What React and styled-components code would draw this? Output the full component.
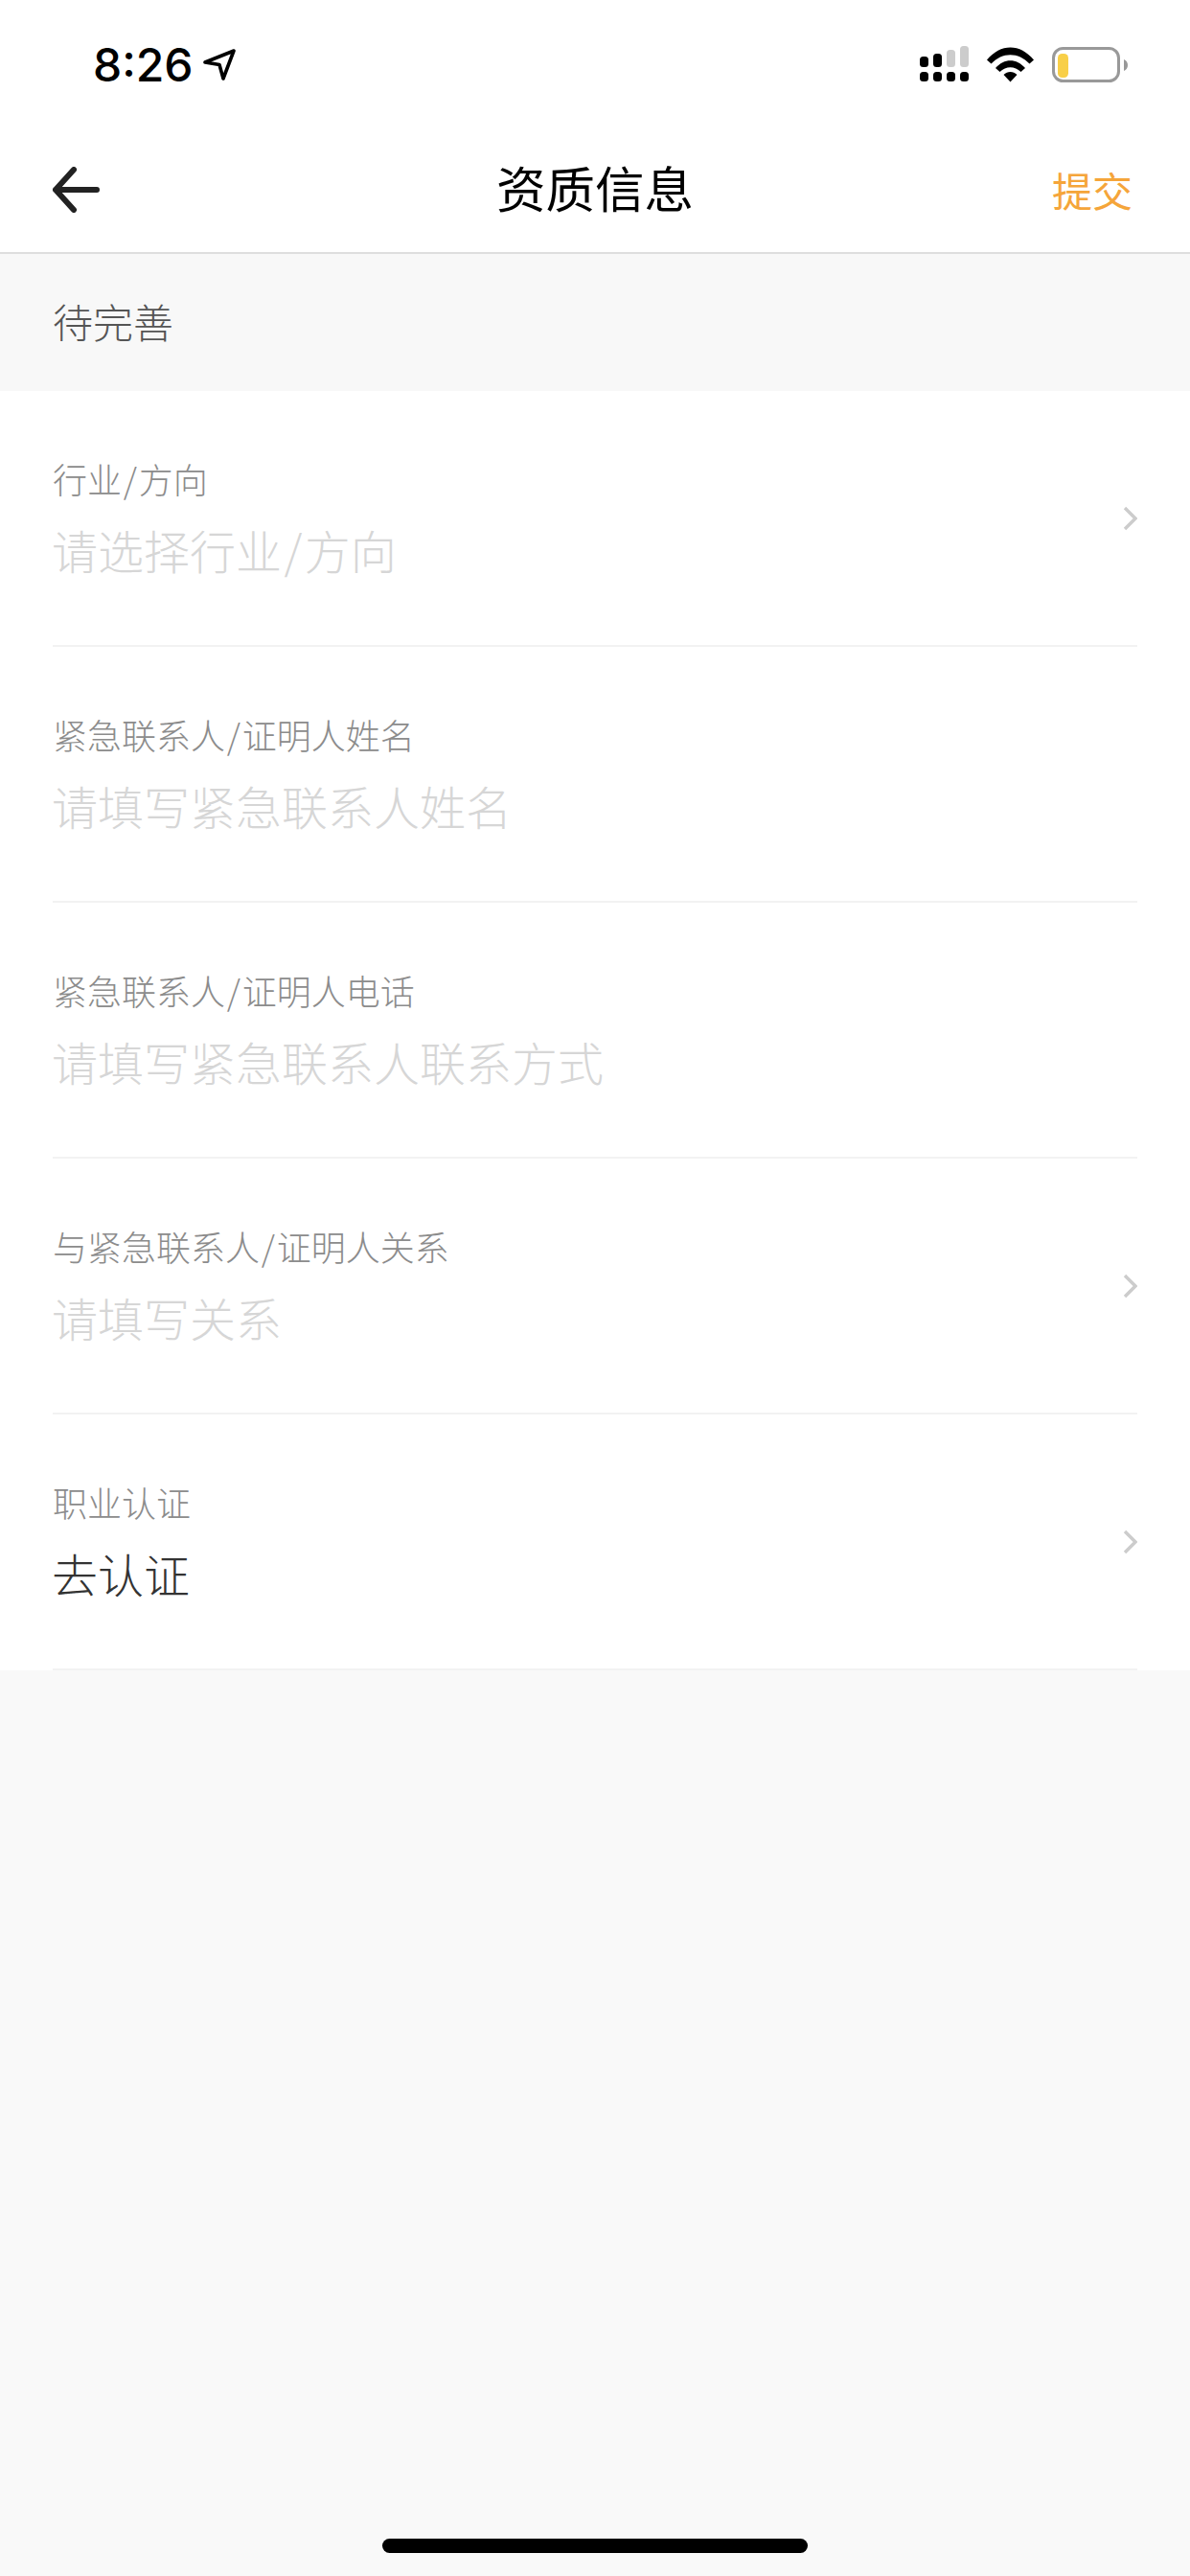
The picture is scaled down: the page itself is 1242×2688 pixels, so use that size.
import React from "react";
import styled, { createGlobalStyle } from "styled-components";

const Global = createGlobalStyle`
  html, body { margin: 0; padding: 0; background: #f9f9f9; }
  body { font-family: "Noto Sans CJK SC", "Noto Sans", sans-serif; }
`;
const Page = styled.div`
  position: relative;
  width: 1242px;
  height: 2688px;
  background: #f9f9f9;
  overflow: hidden;
`;
const StatusBar = styled.div`
  height: 132px;
  background: #fff;
  box-sizing: border-box;
  display: flex;
  justify-content: space-between;
  align-items: flex-start;
  padding: 48px 65px 0 97px;
`;
const TimeGroup = styled.div`
  display: flex;
  align-items: flex-start;
  gap: 10px;
`;
const Time = styled.span`
  font-family: Inter, sans-serif;
  font-size: 48px;
  font-weight: 500;
  line-height: 39px;
  color: #000;
`;
const NavBar = styled.div`
  height: 133px;
  background: #fff;
  border-bottom: 2px solid #dedede;
  box-sizing: border-box;
  display: flex;
  align-items: center;
  justify-content: space-between;
  padding: 0 60px 0 54px;
  position: relative;
`;
const Title = styled.div`
  position: absolute;
  left: 0;
  right: 0;
  top: 25px;
  text-align: center;
  font-size: 51.5px;
  line-height: 76px;
  font-weight: 400;
  color: #000;
`;
const Submit = styled.span`
  font-size: 42px;
  line-height: 60px;
  font-weight: 400;
  color: #f5a53a;
`;
const StatusNote = styled.div`
  height: 143px;
  box-sizing: border-box;
  padding: 0 55px 5px;
  display: flex;
  align-items: center;
  font-size: 42px;
  font-weight: 300;
  color: #555;
  background: #f8f8f8;
`;
const Form = styled.div`
  background: #fff;
`;
const Row = styled.div`
  height: 267px;
  box-sizing: border-box;
  margin: 0 55px;
  border-bottom: 2px solid #f2f2f2;
  display: flex;
  align-items: center;
  justify-content: space-between;
`;
const Field = styled.div`
  display: flex;
  flex-direction: column;
  gap: 13px;
`;
const Label = styled.div`
  font-size: 36px;
  line-height: 52px;
  font-weight: 300;
  color: #8c8c8c;
`;
const Value = styled.div`
  font-size: 48px;
  line-height: 70px;
  font-weight: 300;
  margin-left: -1px;
  color: ${(p) => (p.$filled ? "#333" : "#d6d6d6")};
`;
const Slash = styled.span`
  margin: 0 0.05em;
`;
const HomeBar = styled.div`
  position: absolute;
  left: 399px;
  top: 2649px;
  width: 444px;
  height: 15px;
  border-radius: 8px;
  background: #000;
`;
const Icons = styled.div`
  display: flex;
  align-items: flex-start;
  gap: 19px;
`;

const Arrow = () => (
  <svg width="34" height="33" viewBox="0 0 34 33" style={{ marginTop: 3 }}>
    <path d="M2 14 L32 2 L21 31 L17 16.5 Z" fill="none" stroke="#000" strokeWidth="3.6" strokeLinejoin="round" />
  </svg>
);
const Signal = () => (
  <svg width="51" height="38" viewBox="0 0 51 38">
    <rect x="0" y="11" width="9" height="11" rx="3.5" fill="#000" />
    <rect x="14" y="8" width="9" height="14" rx="3.5" fill="#000" />
    <rect x="28" y="4" width="9" height="18" rx="3.5" fill="#ccc" />
    <rect x="42" y="0" width="9" height="22" rx="3.5" fill="#ccc" />
    <rect x="0" y="27" width="9" height="10" rx="3.5" fill="#000" />
    <rect x="14" y="27" width="9" height="10" rx="3.5" fill="#000" />
    <rect x="28" y="27" width="9" height="10" rx="3.5" fill="#000" />
    <rect x="42" y="27" width="9" height="10" rx="3.5" fill="#000" />
  </svg>
);
const Wifi = () => (
  <svg width="49" height="37" viewBox="0 0 49 37" style={{ marginTop: 1 }}>
    <path d="M0 13.5 C14 -4 35 -4 49 13.5 L44.5 17.5 C33 5 16 5 4.5 17.5 Z" fill="#000" />
    <path d="M9 22 C18 11.5 31 11.5 40 22 L35.5 26 C29 19.5 20 19.5 13.5 26 Z" fill="#000" />
    <path d="M17.5 29 C21.5 25 27.5 25 31.5 29 L24.5 36.5 Z" fill="#000" />
  </svg>
);
const Battery = () => (
  <svg width="79" height="38" viewBox="0 0 79 38" style={{ marginTop: 1 }}>
    <rect x="1.5" y="1.5" width="68" height="34" rx="10" fill="none" stroke="#999" strokeWidth="3" />
    <rect x="6" y="7" width="11" height="25" rx="4.5" fill="#f8cf48" />
    <path d="M75 13 C77.5 14 79 16 79 19 C79 22 77.5 24 75 25 Z" fill="#999" />
  </svg>
);
const Back = () => (
  <svg width="50" height="48" viewBox="0 0 50 48">
    <path d="M4 24 H47 M23 3 L4 24 L23 45" fill="none" stroke="#222" strokeWidth="6" strokeLinecap="round" strokeLinejoin="round" />
  </svg>
);
const Chevron = () => (
  <svg width="16" height="26" viewBox="0 0 16 26">
    <path d="M3 2 L14 13 L3 24" fill="none" stroke="#ccc" strokeWidth="3.4" />
  </svg>
);

const withSlash = (t) => {
  const parts = t.split("/");
  return parts.length === 2 ? (
    <>
      {parts[0]}
      <Slash>/</Slash>
      {parts[1]}
    </>
  ) : (
    t
  );
};

const rows = [
  { label: "行业/方向", value: "请选择行业/方向", arrow: true },
  { label: "紧急联系人/证明人姓名", value: "请填写紧急联系人姓名" },
  { label: "紧急联系人/证明人电话", value: "请填写紧急联系人联系方式" },
  { label: "与紧急联系人/证明人关系", value: "请填写关系", arrow: true },
  { label: "职业认证", value: "去认证", arrow: true, filled: true },
];

export default function App() {
  return (
    <Page>
      <Global />
      <StatusBar>
        <TimeGroup>
          <Time>8:26</Time>
          <Arrow />
        </TimeGroup>
        <Icons>
          <Signal />
          <Wifi />
          <Battery />
        </Icons>
      </StatusBar>
      <NavBar>
        <Back />
        <Title>资质信息</Title>
        <Submit>提交</Submit>
      </NavBar>
      <StatusNote>待完善</StatusNote>
      <Form>
        {rows.map((r) => (
          <Row key={r.label}>
            <Field>
              <Label>{withSlash(r.label)}</Label>
              <Value $filled={r.filled}>{withSlash(r.value)}</Value>
            </Field>
            {r.arrow && <Chevron />}
          </Row>
        ))}
      </Form>
      <HomeBar />
    </Page>
  );
}
